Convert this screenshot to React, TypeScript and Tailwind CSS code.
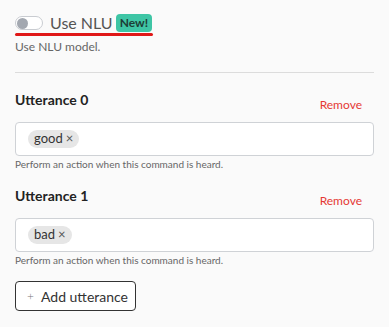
import React from "react";

const utterances = [
  { id: 0, tags: ["good"] },
  { id: 1, tags: ["bad"] },
];

const App = () => {
  return (
    <div
      className="min-h-screen w-full bg-[#fafafa] px-[15px] pt-[14px]"
      style={{ fontFamily: "Lato, 'Open Sans', sans-serif" }}
    >
      <div className="flex h-[18px] items-center">
        <div className="flex h-[14px] w-[28px] items-center rounded-full border border-[#c9ccd1] bg-white px-[1px]">
          <div className="h-[11px] w-[11px] rounded-full bg-[#a3a8b0]" />
        </div>
        <span className="ml-[7px] text-[16px] leading-none text-[#555]">Use NLU</span>
        <span className="ml-[3px] flex h-[18px] items-center rounded-[4px] bg-[#3ec5a5] px-[4px] text-[12px] font-bold text-[#1d3d36]">
          New!
        </span>
      </div>
      <div className="mt-[1px] h-[3px] w-[138px] rounded-full bg-[#e01818]" />
      <p className="mt-[3px] text-[12px] leading-[16px] text-[#666]">Use NLU model.</p>
      <div className="mt-[17px] w-[359px] border-t border-[#dcdcdc]" />

      <div className="mt-[17px] flex flex-col gap-[15px]">
        {utterances.map((u) => (
          <div key={u.id} className="w-[359px]">
            <div className="flex items-end justify-between">
              <h3 className="text-[14px] font-bold leading-[20px] text-[#222]">Utterance {u.id}</h3>
              <button className="mr-[12px] translate-y-[3px] text-[12px] leading-[16px] text-[#e53935]">Remove</button>
            </div>
            <div className="mt-[12px] flex h-[34px] items-center gap-2 rounded-[4px] border border-[#cfd2d6] bg-white px-[12px]">
              {u.tags.map((t) => (
                <span
                  key={t}
                  className="flex h-[18px] items-center gap-[3px] rounded-full bg-[#e6e6e6] px-[6px] text-[13px] text-[#333]"
                >
                  {t}
                  <span className="text-[13px] text-[#555]">×</span>
                </span>
              ))}
            </div>
            <p className="mt-[1px] text-[10px] leading-[14px] text-[#666]">
              Perform an action when this command is heard.
            </p>
          </div>
        ))}
      </div>

      <button className="mt-[14px] flex h-[30px] w-[121px] items-center gap-[7px] whitespace-nowrap rounded-[4px] border border-[#333] bg-white pl-[11px] text-[14px] text-[#333]">
        <span className="text-[12px] font-light text-[#777]">+</span>
        Add utterance
      </button>
    </div>
  );
};

export default App;
